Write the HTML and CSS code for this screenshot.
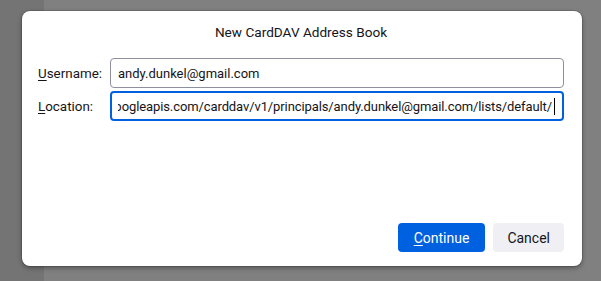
FILE: index.html
```html
<!DOCTYPE html>
<html lang="en">
<head>
    <meta charset="UTF-8">
    <meta name="viewport" content="width=device-width, initial-scale=1.0">
    <title>New CardDAV Address Book</title>
    <link rel="stylesheet" href="styles.css">
</head>
<body>

    <div class="dialog">
        <h1 class="title">New CardDAV Address Book</h1>

        <div class="form">
            <label class="label"><u>U</u>sername:</label>
            <div class="field">
                <div class="field-text"><span>andy.dunkel@gmail.com</span></div>
            </div>

            <label class="label"><u>L</u>ocation:</label>
            <div class="field focused">
                <div class="field-text scrolled">
                    <span>https://www.googleapis.com/carddav/v1/principals/andy.dunkel@gmail.com/lists/default/</span><span class="caret"></span>
                </div>
            </div>
        </div>

        <div class="actions">
            <button class="btn primary" type="button"><u>C</u>ontinue</button>
            <button class="btn" type="button">Cancel</button>
        </div>
    </div>

</body>
</html>
```

FILE: styles.css
```css
* {
    margin: 0;
    padding: 0;
    box-sizing: border-box;
}

body {
    height: 281px;
    overflow: hidden;
    font-family: "Segoe UI", Roboto, "Noto Sans", sans-serif;
    color: #15141a;
    background: linear-gradient(to right, #747474 44px, #808080 44px);
}

.dialog {
    width: 560px;
    height: 255px;
    margin: 11px 0 0 22px;
    padding: 11px 18px 14px 16px;
    display: flex;
    flex-direction: column;
    background-color: #fff;
    border-radius: 8px;
    box-shadow: 0 0 0 1px rgba(0, 0, 0, 0.12), 0 2px 5px rgba(0, 0, 0, 0.35);
}

.title {
    text-align: center;
    font-size: 13.6px;
    font-weight: normal;
    line-height: 20px;
    margin-bottom: 16px;
}

.form {
    display: grid;
    grid-template-columns: 72px minmax(0, 1fr);
    row-gap: 3px;
    align-items: center;
}

.label {
    font-size: 13.4px;
}

.label u,
.btn u {
    text-underline-offset: 2px;
    text-decoration-thickness: 1px;
}

.field {
    min-width: 0;
    height: 30px;
    padding: 0 7px;
    display: flex;
    align-items: center;
    border: 1px solid #8f8f9d;
    border-radius: 4px;
    font-size: 13px;
}

.field.focused {
    padding: 0 6px;
    border: 2px solid #0061e0;
}

.field-text {
    flex: 1;
    min-width: 0;
    display: flex;
    align-items: center;
    overflow: hidden;
    white-space: nowrap;
}

.field-text span {
    flex: none;
}

.field-text.scrolled {
    justify-content: flex-end;
    padding-right: 1px;
    letter-spacing: -0.1px;
}

.caret {
    width: 1px;
    height: 17px;
    margin-left: 2px;
    background-color: #000;
}

.actions {
    margin-top: auto;
    display: flex;
    justify-content: flex-end;
    gap: 8px;
}

.btn {
    height: 29px;
    padding: 0 14px;
    border: none;
    border-radius: 4px;
    font-family: inherit;
    font-size: 14px;
    color: #15141a;
    background-color: #f0f0f4;
}

.btn.primary {
    padding: 0 16px;
    color: #fff;
    background-color: #0061e0;
}
```
